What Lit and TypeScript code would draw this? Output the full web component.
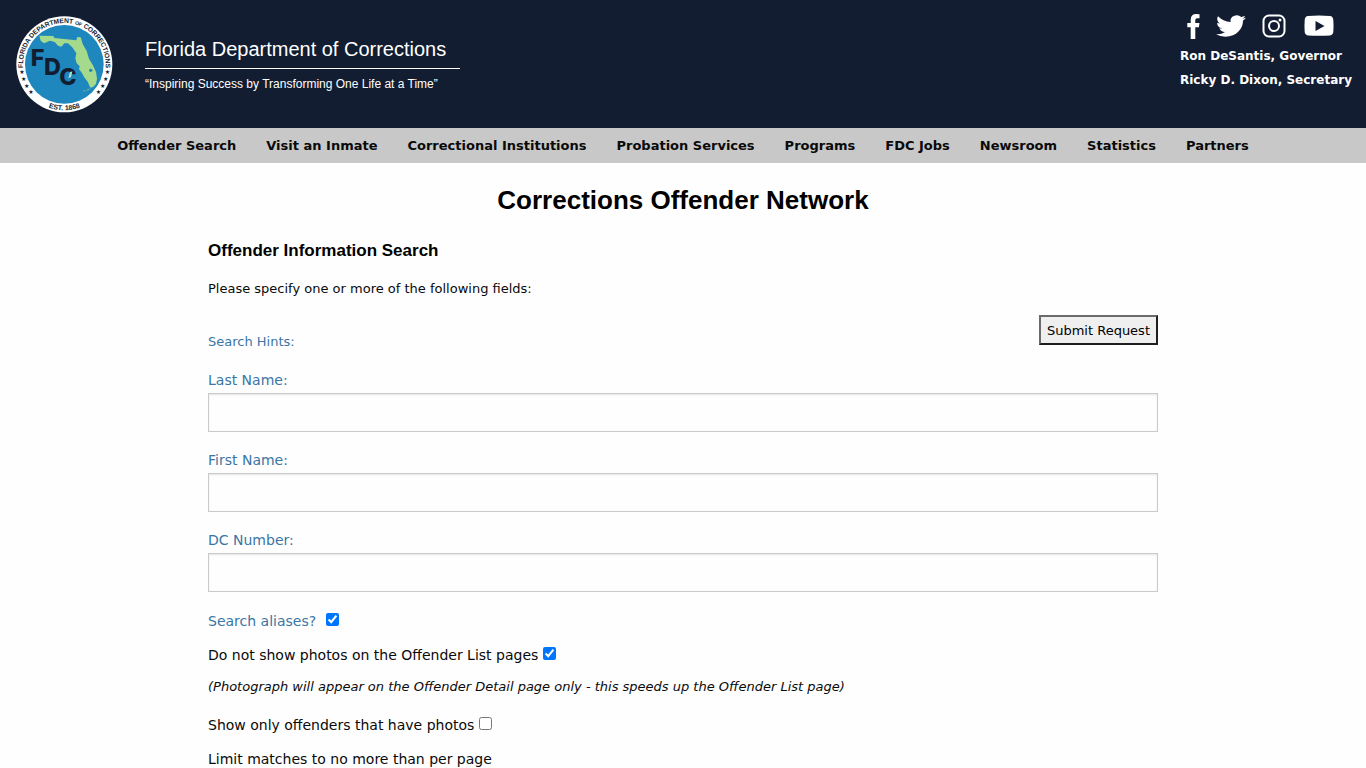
import { LitElement, html, css, svg } from "lit";
import { customElement } from "lit/decorators.js";

const NAV_ITEMS = [
  "Offender Search",
  "Visit an Inmate",
  "Correctional Institutions",
  "Probation Services",
  "Programs",
  "FDC Jobs",
  "Newsroom",
  "Statistics",
  "Partners",
];

const SEAL_STARS = [
  [66, 214], [71, 236], [80, 256], [93, 275],
  [322, 214], [317, 236], [308, 256], [295, 275],
];

@customElement("fdc-seal")
export class FdcSeal extends LitElement {
  static styles = css`
    :host { display: block; }
    .seal { display: block; width: 128px; height: 128px; }
    .ring { font: 700 20px "Liberation Sans", Arial, sans-serif; fill: #121d31; }
    .small { font-size: 15px; }
    .est { font-size: 21px; }
    .star { font: 18px "DejaVu Sans", sans-serif; fill: #121d31; text-anchor: middle; }
    .mono { font: 800 70px Inter, "Liberation Sans", sans-serif; fill: #121d31; }
  `;

  render() {
    return html`
      <svg class="seal" viewBox="0 0 384 384" role="img" aria-label="Florida Department of Corrections seal">
        <defs>
          <path id="top" d="M69.700 206 A124 124 0 1 1 316.300 206" />
          <path id="bottom" d="M55 193 A138 138 0 0 0 331 193" />
        </defs>
        <circle cx="193" cy="193" r="144" fill="#fff" />
        <circle cx="193" cy="193" r="118" fill="#1e87bd" />
        <path fill="#a5d98c" d="M118 107 L160 108 L163 114 L229 121 L232 111 L242 112 L248 132 L260 153 L267 176 L280 198 L288 216 L291 236 L288 252 L279 261 L270 262 L264 247 L252 231 L246 219 L237 208 L239 199 L230 190 L226 175 L229 160 L218 143 L204 130 L193 130 L184 140 L174 137 L164 126 L150 122 L132 130 L122 122 Z" />
        <path d="M278 259 Q268 271 250 273" fill="none" stroke="#a5d98c" stroke-width="2" stroke-dasharray="9 4" />
        <circle cx="272" cy="211" r="5" fill="#1e87bd" />
        <text class="mono" x="92" y="198">F</text>
        <text class="mono" x="132" y="224">D</text>
        <text class="mono" x="178" y="256">C</text>
        <path d="M210 217 L217 214 L213 231 L205 235 Z" fill="#b5e2d6" />
        <text class="ring"><textPath href="#top" startOffset="50%" text-anchor="middle">FLORIDA DEPARTMENT <tspan class="small">OF</tspan> CORRECTIONS</textPath></text>
        <text class="ring est"><textPath href="#bottom" startOffset="50%" text-anchor="middle">EST. 1868</textPath></text>
        ${SEAL_STARS.map(([x, y]) => svg`<text class="star" x=${x} y=${y + 7}>★</text>`)}
      </svg>
    `;
  }
}

@customElement("site-header")
export class SiteHeader extends LitElement {
  static styles = css`
    :host { display: block; font-family: Verdana, "DejaVu Sans", sans-serif; }
    .banner {
      display: flex;
      justify-content: space-between;
      height: 128px;
      background: #121d31;
      color: #fff;
    }
    .brand { display: flex; align-items: flex-start; gap: 17px; }
    .titles { width: 315px; padding-top: 34px; font-family: "Liberation Sans", Arial, sans-serif; }
    .name { margin: 0; padding-bottom: 4px; border-bottom: 1px solid #fff; font-size: 20px; line-height: 30px; font-weight: 400; }
    .motto { margin: 0; padding-top: 5px; font-size: 12px; line-height: 20px; }
    .contact { padding: 12px 14px 0 0; }
    .social { display: flex; align-items: center; gap: 16px; height: 28px; padding: 0 0 4px 7px; }
    .social a { display: block; }
    .social svg { display: block; fill: #fff; }
    .official { margin: 0; font-size: 12px; line-height: 24px; font-weight: 700; white-space: nowrap; }
    .nav { display: flex; justify-content: center; gap: 30px; height: 35px; background: #c8c8c8; }
    .nav a { color: #0a0a0a; font-size: 13px; line-height: 35px; font-weight: 700; text-decoration: none; white-space: nowrap; }
  `;

  render() {
    return html`
      <header class="banner">
        <div class="brand">
          <fdc-seal></fdc-seal>
          <div class="titles">
            <p class="name">Florida Department of Corrections</p>
            <p class="motto">“Inspiring Success by Transforming One Life at a Time”</p>
          </div>
        </div>
        <div class="contact">
          <div class="social">
            <a href="#" aria-label="Facebook">
              <svg width="13" height="25" viewBox="0 0 13 25"><path d="M12.500 .3v4H10.200Q8.300 4.300 8.300 6v3h4.200l-.6 4.300H8.300V25H3.700V13.300H.3V9h3.400V5.700Q3.700 .1 9.200.1q2 0 3.300.2Z" /></svg>
            </a>
            <a href="#" aria-label="Twitter">
              <svg width="30" height="22" viewBox="0 2 24 20" preserveAspectRatio="none"><path d="M23.953 4.570a10 10 0 0 1-2.825.775 4.958 4.958 0 0 0 2.163-2.723c-.951.555-2.005.959-3.127 1.184a4.920 4.920 0 0 0-8.384 4.482C7.690 8.095 4.067 6.130 1.640 3.162a4.822 4.822 0 0 0-.666 2.475c0 1.710.870 3.213 2.188 4.096a4.904 4.904 0 0 1-2.228-.616v.060a4.923 4.923 0 0 0 3.946 4.827 4.996 4.996 0 0 1-2.212.085 4.936 4.936 0 0 0 4.604 3.417 9.867 9.867 0 0 1-6.102 2.105c-.390 0-.779-.023-1.170-.067a13.995 13.995 0 0 0 7.557 2.209c9.053 0 13.998-7.496 13.998-13.985 0-.210 0-.420-.015-.630A9.935 9.935 0 0 0 24 4.590z" /></svg>
            </a>
            <a href="#" aria-label="Instagram">
              <svg width="24" height="24" viewBox="0 0 24 24"><rect x="1.500" y="1.500" width="21" height="21" rx="5.500" fill="none" stroke="#fff" stroke-width="2" /><circle cx="12" cy="12" r="5" fill="none" stroke="#fff" stroke-width="2" /><circle cx="18" cy="6" r="1.500" /></svg>
            </a>
            <a href="#" aria-label="YouTube">
              <svg width="32" height="22" viewBox="-2 0 32 22"><path fill-rule="evenodd" d="M4 1Q15 0 26 1Q29 1.300 29.300 5Q29.800 11 29.300 17Q29 20 26 20.400Q15 21.300 4 20.400Q1 20 .7 17Q.2 11 .7 5Q1 1.300 4 1ZM11.500 6v10l9-5Z" /></svg>
            </a>
          </div>
          <p class="official">Ron DeSantis, Governor</p>
          <p class="official">Ricky D. Dixon, Secretary</p>
        </div>
      </header>
      <nav class="nav" aria-label="Main">
        ${NAV_ITEMS.map((item) => html`<a href="#">${item}</a>`)}
      </nav>
    `;
  }
}

@customElement("offender-search")
export class OffenderSearch extends LitElement {
  static styles = css`
    :host { display: block; color: #0a0a0a; font-family: Verdana, "DejaVu Sans", sans-serif; font-size: 14px; }
    .page { max-width: 950px; margin: 0 auto; padding: 19px 16px 0; }
    .title, .subtitle { margin: 0; font-family: "Liberation Sans", Arial, sans-serif; font-weight: 700; color: #000; }
    .title { font-size: 26px; line-height: 36px; text-align: center; }
    .subtitle { margin-top: 20px; font-size: 17px; line-height: 25px; }
    .intro { margin: 16px 0; font-size: 13px; line-height: 20px; }
    .actions { display: flex; justify-content: space-between; align-items: flex-start; }
    .hints { padding-top: 17px; font-size: 13px; line-height: 20px; }
    .submit {
      height: 30px;
      margin: 0;
      padding: 0 6px;
      border: 2px solid;
      border-color: #6b6b6b #1f1f1f #1f1f1f #6b6b6b;
      border-radius: 0;
      background: #efefef;
      color: #000;
      font: 13px Verdana, "DejaVu Sans", sans-serif;
    }
    .fields { display: grid; gap: 16px; margin-top: 16px; }
    .hint { color: #3a76a6; text-decoration: none; }
    .label { display: block; line-height: 25px; }
    .box {
      display: block;
      box-sizing: border-box;
      width: 100%;
      height: 39px;
      padding: 8px;
      border: 1px solid #cacaca;
      border-radius: 0;
      background: #fefefe;
      box-shadow: inset 0 1px 2px rgba(10, 10, 10, 0.1);
      font: inherit;
    }
    .options { display: grid; gap: 9px; padding: 17px 0 16px; }
    .row { display: flex; align-items: center; gap: 5px; line-height: 25px; }
    .row.wide { gap: 10px; }
    .check { width: 13px; height: 13px; margin: 0 0 4px; }
    .note { margin: 0 0 7px; font-size: 13px; line-height: 20px; font-style: italic; }
  `;

  render() {
    return html`
      <main class="page">
        <h1 class="title">Corrections Offender Network</h1>
        <h2 class="subtitle">Offender Information Search</h2>
        <p class="intro">Please specify one or more of the following fields:</p>
        <form>
          <div class="actions">
            <a class="hint hints" href="#">Search Hints:</a>
            <button class="submit" type="submit">Submit Request</button>
          </div>
          <div class="fields">
            ${["Last Name", "First Name", "DC Number"].map((name, i) => html`
              <div>
                <label class="hint label" for="field-${i}">${name}:</label>
                <input class="box" id="field-${i}" type="text" />
              </div>
            `)}
          </div>
          <div class="options">
            <div class="row wide">
              <label class="hint" for="aliases">Search aliases?</label>
              <input class="check" id="aliases" type="checkbox" checked />
            </div>
            <div class="row">
              <label for="no-photos">Do not show photos on the Offender List pages</label>
              <input class="check" id="no-photos" type="checkbox" checked />
            </div>
            <p class="note">(Photograph will appear on the Offender Detail page only - this speeds up the Offender List page)</p>
            <div class="row">
              <label for="only-photos">Show only offenders that have photos</label>
              <input class="check" id="only-photos" type="checkbox" />
            </div>
            <div class="row">Limit matches to no more than per page</div>
          </div>
        </form>
      </main>
    `;
  }
}

@customElement("app-root")
export class AppRoot extends LitElement {
  static styles = css`
    :host { display: block; height: 100vh; overflow: hidden; background: #fefefe; }
  `;

  render() {
    return html`
      <site-header></site-header>
      <offender-search></offender-search>
    `;
  }
}
